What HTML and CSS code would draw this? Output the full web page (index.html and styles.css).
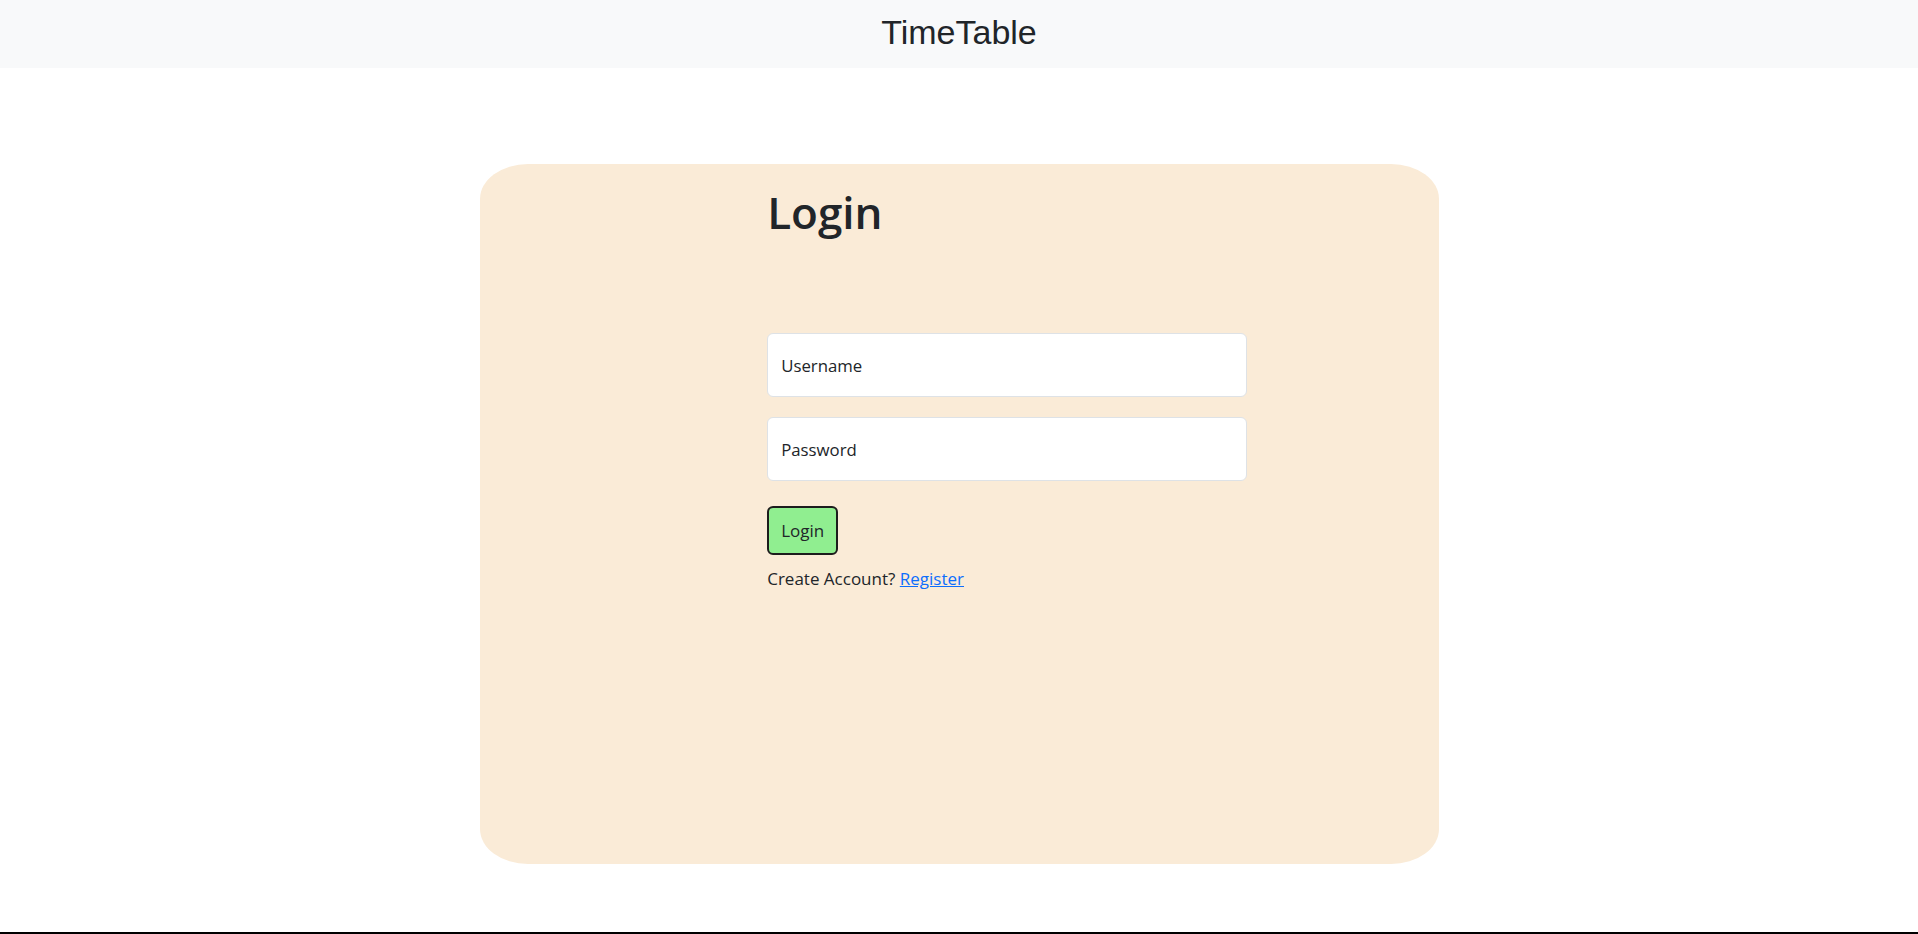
FILE: index.html
```html
<!DOCTYPE html>
<html lang="en">
<head>
<meta charset="utf-8">
<title>TimeTable - Login</title>
<link rel="stylesheet" href="styles.css">
</head>
<body>
<header class="topbar">
  <div class="brand">TimeTable</div>
</header>
<main class="main">
  <section class="card">
    <form class="login-form">
      <h1 class="title">Login</h1>
      <input class="field" type="text" placeholder="Username">
      <input class="field" type="password" placeholder="Password">
      <button class="btn" type="button">Login</button>
      <p class="note">Create Account? <a href="#" class="link">Register</a></p>
    </form>
  </section>
</main>
<footer class="footer"></footer>
</body>
</html>
```

FILE: styles.css
```css
* { box-sizing: border-box; }

html, body {
  margin: 0;
  padding: 0;
}

body {
  min-height: 100vh;
  display: flex;
  flex-direction: column;
  font-family: "Open Sans", "Noto Sans", sans-serif;
  font-size: 17px;
  line-height: 24px;
  color: #212529;
  background: #ffffff;
  overflow: hidden;
}

.topbar {
  height: 68px;
  background: #f8f9fa;
  display: flex;
  justify-content: center;
  padding-top: 12px;
}

.brand {
  font-family: "Liberation Sans", Arial, sans-serif;
  font-size: 34px;
  line-height: 40px;
  color: #212529;
}

.main {
  flex: 1;
  padding-top: 96px;
}

.card {
  width: 50%;
  height: 700px;
  margin: 0 auto;
  background: #faebd7;
  border-radius: 5%;
  padding-top: 22px;
}

.login-form {
  margin-left: 30%;
  width: 50%;
  display: flex;
  flex-direction: column;
  align-items: flex-start;
}

.title {
  margin: 0 0 94px 0;
  font-size: 44px;
  line-height: 53px;
  font-weight: 600;
  color: #212529;
}

.field {
  width: 100%;
  height: 64px;
  margin: 0 0 20px 0;
  padding: 0 13px;
  border: 1px solid #dee2e6;
  border-radius: 6px;
  background: #ffffff;
  font-family: inherit;
  font-size: 16.8px;
  color: #212529;
  outline: none;
}

.field::placeholder {
  color: #212529;
  opacity: 1;
}

.field + .btn { margin-top: 5px; }

.btn {
  padding: 10px 12px;
  border: 2px solid #1c1c1c;
  border-radius: 6px;
  background: #90ee90;
  font-family: inherit;
  font-size: 17px;
  line-height: 25px;
  color: #212529;
  cursor: pointer;
}

.note {
  margin: 12px 0 0 0;
  font-size: 17px;
  line-height: 24px;
}

.link {
  color: #0d6efd;
  text-decoration: underline;
}

.footer {
  border-top: 2px solid #000000;
  height: 0;
}
```
